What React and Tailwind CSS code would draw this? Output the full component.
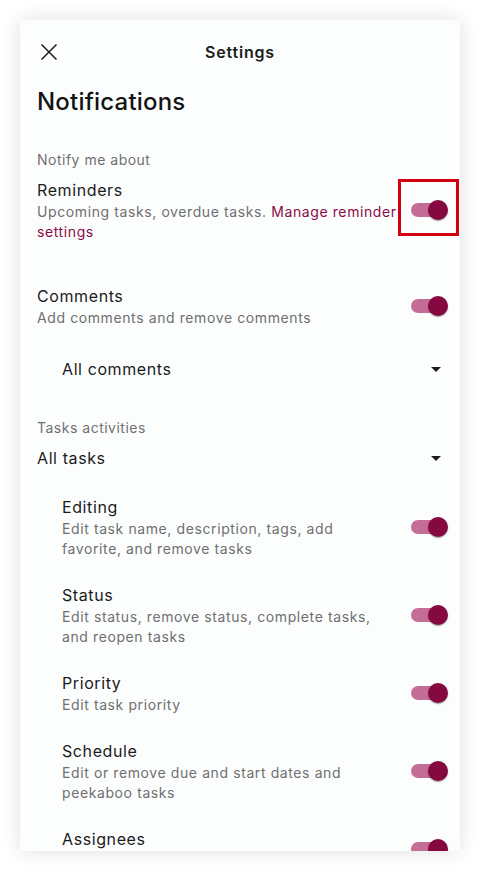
import React from 'react';

const font = { fontFamily: 'Inter, "Noto Sans", sans-serif' };

const Toggle = ({ highlight }) => (
  <div className="relative w-[58px] h-[38px] shrink-0">
    <div className="absolute left-[12px] top-[12px] w-[34px] h-[14px] rounded-full bg-[#c46e97]" />
    <div className="absolute left-[29px] top-[9px] w-5 h-5 rounded-full bg-[#850840] shadow-[0_2px_1px_-1px_rgba(0,0,0,0.2),0_1px_1px_0_rgba(0,0,0,0.14),0_1px_3px_0_rgba(0,0,0,0.12)]" />
    {highlight && (
      <div className="absolute -left-px -top-3 w-[61px] h-[57px] border-[3px] border-[#d3000f]" />
    )}
  </div>
);

const CloseIcon = () => (
  <svg width="24" height="24" viewBox="0 0 24 24" fill="none" stroke="#1c1c1c" strokeWidth="1.5">
    <path d="M4.5 4.5l15 15M19.5 4.5l-15 15" />
  </svg>
);

const ArrowDown = () => (
  <svg width="24" height="24" viewBox="0 0 24 24" fill="#1c1c1c">
    <path d="M7 10l5 5 5-5z" />
  </svg>
);

const Row = ({ title, children, indent, highlight, className = '' }) => (
  <div className={`flex items-center ${indent ? 'pl-[25px]' : ''} ${className}`}>
    <div className={`flex-1 min-w-0 ${indent ? 'pr-5' : ''}`}>
      <div className="text-base leading-6 text-[#1b1b1b] tracking-[0.6px]">{title}</div>
      <div className="text-sm leading-5 text-[#6f6f6f] tracking-[0.6px]">{children}</div>
    </div>
    <Toggle highlight={highlight} />
  </div>
);

const Dropdown = ({ label, indent, className = '' }) => (
  <div className={`flex items-center h-6 pr-[9px] ${indent ? 'pl-[25px]' : ''} ${className}`}>
    <div className="flex-1 text-base leading-6 text-[#1b1b1b] tracking-[0.6px]">{label}</div>
    <ArrowDown />
  </div>
);

export default function App() {
  return (
    <div className="min-h-screen bg-white p-5" style={font}>
      <div className="w-[440px] h-[831px] overflow-hidden bg-[#fcfefe] shadow-[0_0_18px_rgba(0,0,0,0.13)] pl-[17px] pr-[3px]">
        {/* header */}
        <div className="h-16 flex items-center">
          <CloseIcon />
          <div className="flex-1 text-center text-base font-semibold text-[#1b1b1b] tracking-[0.8px] pr-[38px]">
            Settings
          </div>
        </div>

        <h1 className="mt-[2px] text-2xl leading-8 font-medium text-[#141414] tracking-[0.2px]">Notifications</h1>

        <div className="mt-8 text-sm leading-5 text-[#707070] tracking-[0.5px]">Notify me about</div>

        <Row title="Reminders" highlight className="mt-2">
          Upcoming tasks, overdue tasks.{' '}
          <span className="text-[#8a0b46]">Manage reminder settings</span>
        </Row>

        <Row title="Comments" className="mt-[42px]">
          Add comments and remove comments
        </Row>

        <Dropdown label="All comments" indent className="mt-[29px]" />

        <div className="mt-[37px] text-sm leading-5 text-[#707070] tracking-[0.5px]">Tasks activities</div>

        <Dropdown label="All tasks" className="mt-2" />

        <div className="mt-[25px] flex flex-col gap-6">
          <Row title="Editing" indent>
            Edit task name, description, tags, add favorite, and remove tasks
          </Row>
          <Row title="Status" indent>
            Edit status, remove status, complete tasks, and reopen tasks
          </Row>
          <Row title="Priority" indent>
            Edit task priority
          </Row>
          <Row title="Schedule" indent>
            Edit or remove due and start dates and peekaboo tasks
          </Row>
          <Row title="Assignees" indent>
            Add or remove assignees
          </Row>
        </div>
      </div>
    </div>
  );
}
